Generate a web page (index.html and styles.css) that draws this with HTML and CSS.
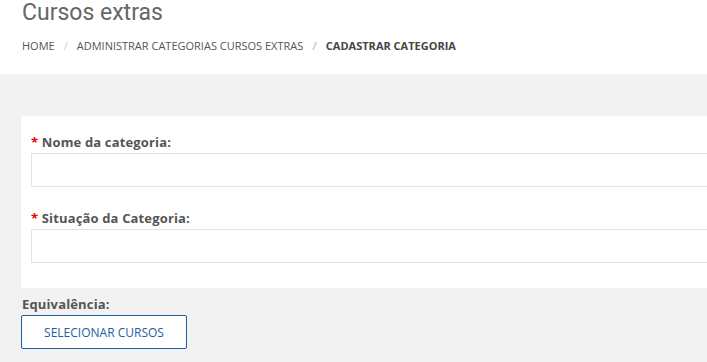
FILE: index.html
```html
<!DOCTYPE html>
<html lang="pt">
<head>
    <meta charset="UTF-8">
    <meta name="viewport" content="width=device-width, initial-scale=1.0">
    <title>Cadastrar Categoria - Cursos extras</title>
    <link rel="stylesheet" href="styles.css">
</head>
<body>
    <header class="page-header">
        <h1 class="page-title">Cursos extras</h1>
        <ol class="breadcrumb">
            <li><a href="#">Home</a></li>
            <li><a href="#">Administrar categorias cursos extras</a></li>
            <li class="active">Cadastrar categoria</li>
        </ol>
    </header>

    <main class="content">
        <form class="form-card">
            <div class="form-group">
                <label class="form-label" for="nome"><span class="required">*</span> Nome da categoria:</label>
                <input type="text" id="nome" class="form-input">
            </div>
            <div class="form-group">
                <label class="form-label" for="situacao"><span class="required">*</span> Situação da Categoria:</label>
                <input type="text" id="situacao" class="form-input">
            </div>
        </form>

        <div class="equivalencia">
            <div class="form-label">Equivalência:</div>
            <button type="button" class="btn-outline">Selecionar cursos</button>
        </div>
    </main>
</body>
</html>
```

FILE: styles.css
```css
html, body {
    overflow: hidden;
}

body {
    margin: 0;
    padding: 0;
    font-family: "Open Sans", Arial, sans-serif;
    background: #f2f2f2;
    color: #555;
}

.page-header {
    background: #fff;
    height: 74px;
    padding: 0 22px;
    box-sizing: border-box;
}

.page-title {
    margin: 0;
    font-family: Roboto, Arial, sans-serif;
    font-weight: 400;
    font-size: 23px;
    line-height: 25px;
    color: #666;
}

.breadcrumb {
    list-style: none;
    margin: 13px 0 0 0;
    padding: 0;
    display: flex;
    font-size: 11px;
    line-height: 16px;
    text-transform: uppercase;
}

.breadcrumb li + li::before {
    content: "/";
    color: #ccc;
    padding: 0 9px;
}

.breadcrumb a {
    color: #555;
    text-decoration: none;
}

.breadcrumb .active {
    font-weight: 700;
    color: #444;
}

.content {
    padding: 42px 0 20px 21px;
}

.form-card {
    background: #fff;
    width: 720px;
    padding: 17px 10px 25px 10px;
    box-sizing: border-box;
}

.form-group + .form-group {
    margin-top: 22px;
}

.form-label {
    display: block;
    font-size: 13px;
    font-weight: 700;
    line-height: 18px;
    letter-spacing: 0.15px;
    color: #555;
    margin-bottom: 2px;
}

.required {
    color: #e00;
}

.form-input {
    display: block;
    width: 100%;
    height: 34px;
    box-sizing: border-box;
    border: 1px solid #e3e3e3;
    background: #fff;
    padding: 6px 10px;
    font-size: 13px;
}

.equivalencia {
    margin-top: 7px;
}

.equivalencia .form-label {
    margin-left: 1px;
    margin-bottom: 2px;
}

.btn-outline {
    width: 166px;
    height: 34px;
    background: #fff;
    border: 1px solid #1c5ea4;
    border-radius: 2px;
    color: #1c5ea4;
    font-family: "Open Sans", Arial, sans-serif;
    font-size: 12px;
    text-transform: uppercase;
    cursor: pointer;
}
```
